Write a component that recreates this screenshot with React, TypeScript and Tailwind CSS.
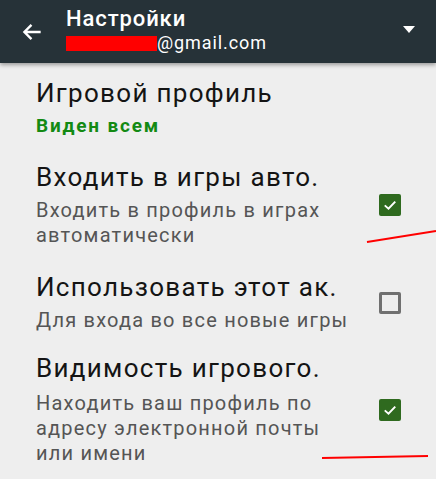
import React from 'react'

const rows = [
  {
    title: 'Входить в игры авто.',
    body: ['Входить в профиль в играх', 'автоматически'],
    checked: true,
  },
  {
    title: 'Использовать этот ак.',
    body: ['Для входа во все новые игры'],
    checked: false,
  },
  {
    title: 'Видимость игрового.',
    body: ['Находить ваш профиль по', 'адресу электронной почты', 'или имени'],
    checked: true,
  },
]

function Checkbox({ checked }: { checked: boolean }) {
  if (!checked) {
    return <div className="w-[22px] h-[22px] rounded-[2px] border-[3px] border-[#707070]" />
  }
  return (
    <div className="w-[22px] h-[22px] rounded-[2px] bg-[#2f6a1f] flex items-center justify-center">
      <svg viewBox="0 0 24 24" className="w-[18px] h-[18px]">
        <path d="M5 12.5 L10 17 L19 7.5" stroke="#fff" strokeWidth="2.6" fill="none" />
      </svg>
    </div>
  )
}

export default function App() {
  return (
    <div
      className="relative w-[436px] h-[479px] overflow-hidden bg-[#eeeeee]"
      style={{ fontFamily: 'Roboto, "Noto Sans", sans-serif' }}
    >
      {/* Toolbar */}
      <div className="relative z-10 h-[63px] bg-[#263238] flex items-center shadow-[0_2px_4px_rgba(0,0,0,0.35)]">
        <div className="w-[66px] flex justify-center pr-[2px]">
          <svg viewBox="0 0 24 24" className="w-[26px] h-[26px]">
            <path d="M20 12 H5 M11.5 5.5 L5 12 L11.5 18.5" stroke="#fff" strokeWidth="2.2" fill="none" />
          </svg>
        </div>
        <div className="flex-1 flex flex-col -mt-[3px]">
          <div className="text-white text-[22px] leading-[26px] font-medium tracking-[0.9px]">Настройки</div>
          <div className="flex items-center text-white text-[18px] leading-[22px] tracking-[0.9px]">
            <span className="w-[91px] h-[15px] bg-[#ff0000]" />
            <span>@gmail.com</span>
          </div>
        </div>
        <div className="w-[54px] flex justify-center -mt-[4px]">
          <svg viewBox="0 0 12 7" className="w-[12px] h-[7px]">
            <polygon points="0 0, 12 0, 6 7" fill="#fff" />
          </svg>
        </div>
      </div>

      {/* Preferences */}
      <div className="pl-[36px] pt-[15px]">
        <div className="text-[26px] leading-[30px] tracking-[1.3px] text-[#141414]">Игровой профиль</div>
        <div className="mt-[6px] text-[19px] leading-[24px] font-bold tracking-[1.8px] text-[#138a13]">Виден всем</div>

        {rows.map((r, i) => (
          <div key={r.title} className={`flex items-center ${i === 2 ? 'mt-[20px]' : 'mt-[24px]'}`}>
            <div className="flex-1 min-w-0">
              <div className="text-[26px] leading-[30px] tracking-[1.3px] text-[#141414] whitespace-nowrap">{r.title}</div>
              <div className={`${i === 2 ? 'mt-[8px]' : 'mt-[6px]'} text-[20px] leading-[25px] tracking-[1.2px] text-[#555555]`}>
                {r.body.map(l => (
                  <div key={l} className="whitespace-nowrap">{l}</div>
                ))}
              </div>
            </div>
            <div className="ml-[10px] mr-[35px]">
              <Checkbox checked={r.checked} />
            </div>
          </div>
        ))}
      </div>

      {/* Red marker strokes drawn over the screenshot */}
      <svg className="absolute inset-0 pointer-events-none" width="436" height="479">
        <path d="M367 242 L436 231" stroke="#ff0000" strokeWidth="2" fill="none" />
        <path d="M322 458 L428 456" stroke="#ff0000" strokeWidth="2" fill="none" />
      </svg>
    </div>
  )
}
